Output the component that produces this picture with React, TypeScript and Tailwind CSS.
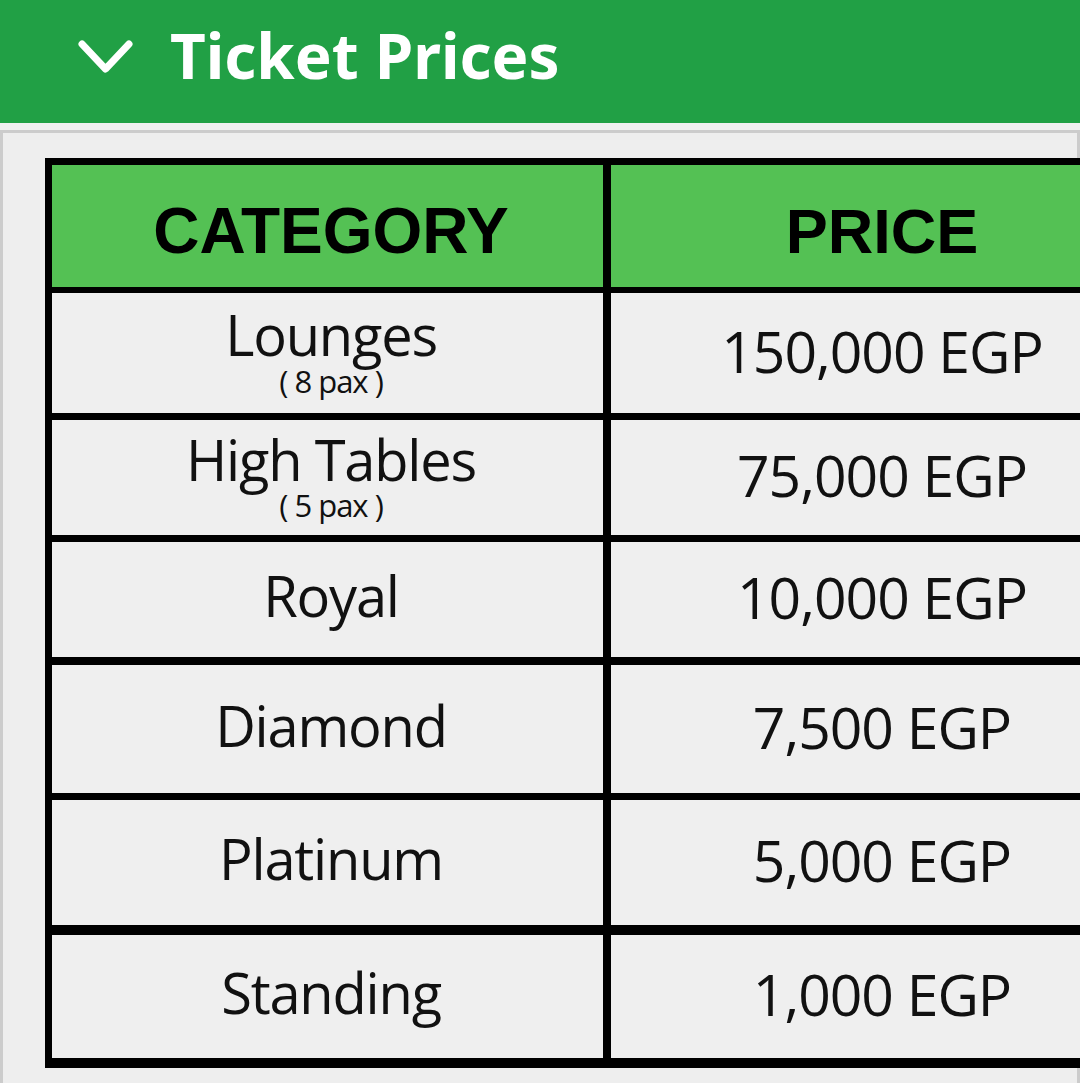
const rows = [
  { name: "Lounges", pax: "( 8 pax )", price: "150,000 EGP", h: "h-[120px]", gap: "mt-[6px]" },
  { name: "High Tables", pax: "( 5 pax )", price: "75,000 EGP", h: "h-[115px]", gap: "mt-[7px]" },
  { name: "Royal", pax: "", price: "10,000 EGP", h: "h-[115px]", gap: "mt-[7px]" },
  { name: "Diamond", pax: "", price: "7,500 EGP", h: "h-[128px]", gap: "mt-[8px]" },
  { name: "Platinum", pax: "", price: "5,000 EGP", h: "h-[125px]", gap: "mt-[7px]" },
  { name: "Standing", pax: "", price: "1,000 EGP", h: "h-[123px]", gap: "mt-[10px]" },
];

const cellFont = { fontFamily: "'Open Sans', 'Noto Sans', sans-serif" };

export default function App() {
  return (
    <div className="w-[1080px] h-[1083px] overflow-hidden bg-[#eeeeee]">
      <header className="h-[123px] bg-[#21a045] flex items-center pl-[77px] pb-[14px]">
        <svg width="57" height="36" viewBox="0 0 57 36" className="mr-[36px] mt-[4px]">
          <path d="M5 5 L28.5 30 L52 5" fill="none" stroke="white" strokeWidth="7" strokeLinecap="round" strokeLinejoin="round" />
        </svg>
        <h1
          className="text-white text-[62px] font-bold leading-none"
          style={{ fontFamily: "'Noto Sans', 'Open Sans', sans-serif" }}
        >
          Ticket Prices
        </h1>
      </header>
      <div className="h-[7px] bg-[#f0f0f0]" />
      <div className="border-t-[3px] border-l-[3px] border-r-[3px] border-[#cccccc] h-[960px] pt-[25px] pl-[42px]">
        <div className="w-[1115px] bg-black p-[7px] pb-[10px]">
          <div className="flex h-[122px]">
            <div className="w-[551px] bg-[#54c154] flex items-center justify-center pl-[7px] pt-[10px]">
              <span className="text-[64px] font-bold text-black leading-none" style={{ fontFamily: "'Liberation Sans', Arial, sans-serif" }}>
                CATEGORY
              </span>
            </div>
            <div className="w-[8px]" />
            <div className="flex-1 bg-[#54c154] flex items-center justify-center pt-[10px]">
              <span className="text-[63px] font-bold text-black leading-none" style={{ fontFamily: "'Liberation Sans', Arial, sans-serif" }}>
                PRICE
              </span>
            </div>
          </div>
          {rows.map((r) => (
            <div key={r.name} className={`flex ${r.h} ${r.gap}`}>
              <div
                className={`w-[551px] bg-[#efefef] flex flex-col items-center justify-center pl-[7px] ${r.pax ? "pb-[4px]" : "pb-[8px]"}`}
                style={cellFont}
              >
                <span className="text-[56px] leading-[1.05] text-[#111] tracking-[-1.2px]">{r.name}</span>
                {r.pax && (
                  <span className="text-[31px] leading-[1] mt-[2px] text-[#111] tracking-[-1px]">{r.pax}</span>
                )}
              </div>
              <div className="w-[8px]" />
              <div className="flex-1 bg-[#efefef] flex items-center justify-center pb-[4px]" style={cellFont}>
                <span className="text-[57px] leading-none text-[#111] tracking-[-1px]">{r.price}</span>
              </div>
            </div>
          ))}
        </div>
      </div>
    </div>
  );
}
